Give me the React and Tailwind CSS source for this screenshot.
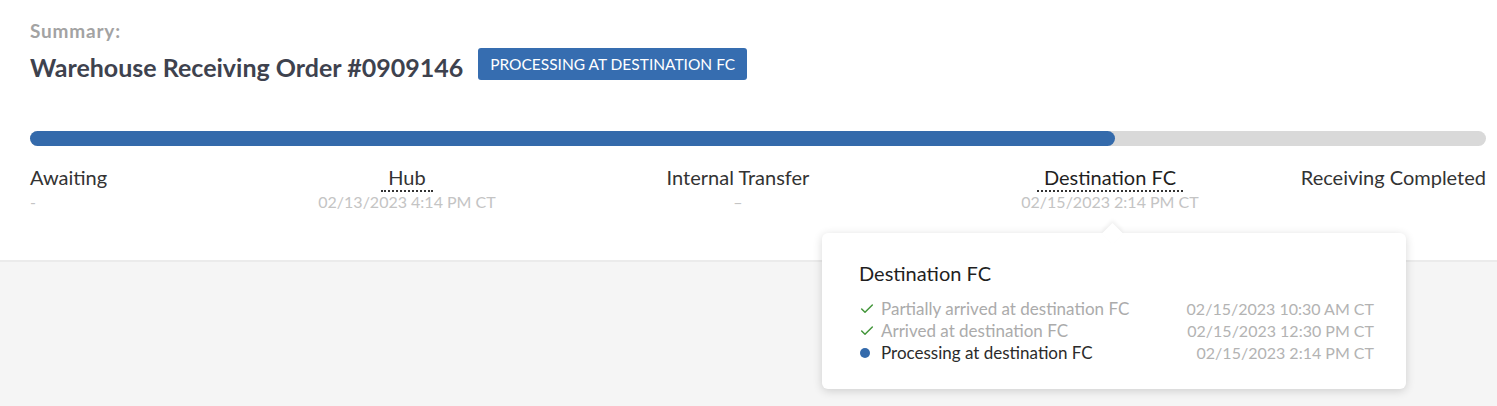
import { Check } from "lucide-react";

const stages = [
  { label: "Awaiting", date: "-", align: "items-start", underline: false },
  { label: "Hub", date: "02/13/2023 4:14 PM CT", align: "items-center", underline: true },
  { label: "Internal Transfer", date: "–", align: "items-center", underline: false },
  { label: "Destination FC", date: "02/15/2023 2:14 PM CT", align: "items-center", underline: true, active: true },
  { label: "Receiving Completed", date: "", align: "items-end", underline: false },
];

const events = [
  { text: "Partially arrived at destination FC", time: "02/15/2023 10:30 AM CT", done: true },
  { text: "Arrived at destination FC", time: "02/15/2023 12:30 PM CT", done: true },
  { text: "Processing at destination FC", time: "02/15/2023 2:14 PM CT", done: false },
];

export default function App() {
  return (
    <div className="min-h-[406px] bg-[#f5f5f5] font-['Lato','Liberation_Sans',sans-serif]">
      <section className="h-[262px] bg-white border-b-2 border-[#ebebeb] pl-[30px] pr-[11px] pt-[20px]">
        <div className="text-[19px] font-bold leading-[22px] tracking-[0.8px] text-[#a3a3a3]">Summary:</div>
        <div className="mt-[6px] flex items-center gap-[15px]">
          <h1 className="h-[32px] pt-[6px] text-[25px] font-bold leading-[26px] text-[#3e424e]">Warehouse Receiving Order #0909146</h1>
          <span className="h-[32px] rounded-[3px] bg-[#366db0] px-[12px] text-[15.5px] leading-[32px] text-white">
            PROCESSING AT DESTINATION FC
          </span>
        </div>

        <div className="mt-[51px] h-[15px] w-full rounded-full bg-[#d9d9d9]">
          <div className="h-full w-[74.5%] rounded-full bg-[#346aab]" />
        </div>

        <div className="mt-[19px] grid grid-cols-[270px_214px_448px_296px_1fr]">
          {stages.map((s) => (
            <div key={s.label} className={`flex flex-col ${s.align}`}>
              <span
                className={`text-[20px] leading-[24px] ${s.active ? "text-[#1f1f1f]" : "text-[#333]"} ${
                  s.underline ? "border-b-2 border-dotted border-[#333] px-[7px] pb-[1px]" : ""
                }`}
              >
                {s.label}
              </span>
              <span className={`${s.underline ? "" : "mt-[3px]"} text-[16px] leading-[19px] text-[#c4c4c4] whitespace-nowrap`}>
                {s.date}
              </span>
            </div>
          ))}
        </div>
      </section>

      <div className="relative">
        <div className="absolute left-[822px] top-[-29px] w-[584px] rounded-[6px] bg-white pl-[37px] pr-[32px] pt-[27px] pb-[25px] shadow-[0_2px_10px_rgba(0,0,0,0.16)]">
          <div className="absolute left-[283px] top-[-7px] h-[15px] w-[15px] rotate-45 bg-white shadow-[-2px_-2px_4px_rgba(0,0,0,0.06)]" />
          <div className="relative text-[20px] leading-[26px] text-[#1f1f1f]">Destination FC</div>
          <div className="relative mt-[12px] flex flex-col">
            {events.map((e) => (
              <div key={e.text} className="flex items-center justify-between text-[17px] leading-[22px]">
                <div className="flex items-center">
                  <span className="flex w-[22px] items-center">
                    {e.done ? (
                      <Check size={16} strokeWidth={2.2} className="text-[#43963a]" />
                    ) : (
                      <span className="ml-[1px] h-[10px] w-[10px] rounded-full bg-[#346aab]" />
                    )}
                  </span>
                  <span className={e.done ? "text-[#ababab]" : "text-[#2b2b2b]"}>{e.text}</span>
                </div>
                <span className="text-[16px] text-[#b3b3b3]">{e.time}</span>
              </div>
            ))}
          </div>
        </div>
      </div>
    </div>
  );
}
